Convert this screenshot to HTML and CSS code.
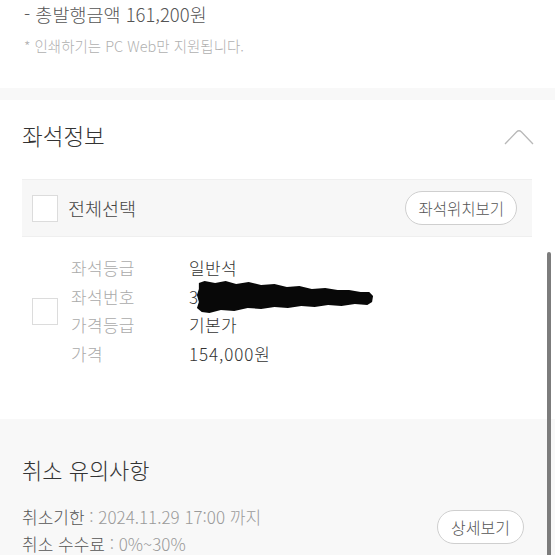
FILE: index.html
```html
<!DOCTYPE html>
<html lang="ko">
<head>
    <meta charset="UTF-8">
    <meta name="viewport" content="width=device-width, initial-scale=1.0">
    <title>좌석정보</title>
    <link rel="stylesheet" href="styles.css">
</head>
<body>
<div class="page">
    <section class="issue">
        <p class="total">- 총발행금액 161,200원</p>
        <p class="note">* 인쇄하기는 PC Web만 지원됩니다.</p>
    </section>

    <div class="band"></div>

    <section class="seat-info">
        <div class="sec-head">
            <h2>좌석정보</h2>
            <svg class="chevron" width="30" height="18" viewBox="0 0 30 18">
                <path d="M1 16 L12.5 4 Q15 1.5 17.5 4 L29 16" fill="none" stroke="#b8b8b8" stroke-width="1.3"/>
            </svg>
        </div>

        <div class="all-bar">
            <div class="select-all">
                <span class="check"></span>
                <span class="select-label">전체선택</span>
            </div>
            <button class="pill">좌석위치보기</button>
        </div>

        <div class="seat-row">
            <span class="check"></span>
            <dl class="seat-detail">
                <dt>좌석등급</dt>
                <dd>일반석</dd>
                <dt>좌석번호</dt>
                <dd class="hidden-no">3
                    <!-- marker scribble over the seat number -->
                    <svg class="scribble" width="178" height="34" viewBox="0 0 186 34" preserveAspectRatio="none">
                        <path d="M3 3 L9 1 L20 3 L31 1 L42 4 L55 2 L68 5 L82 4 L95 7 L108 6 L121 9 L135 8 L148 10 L160 10 L172 12 L181 12 L185 16 L184 22 L179 25 L166 24 L152 26 L138 25 L124 27 L110 26 L96 28 L82 27 L68 29 L54 28 L40 31 L26 30 L14 33 L6 32 L1 28 L3 22 L1 15 L3 9 Z" fill="#080808"/>
                    </svg>
                </dd>
                <dt>가격등급</dt>
                <dd>기본가</dd>
                <dt>가격</dt>
                <dd class="num">154,000원</dd>
            </dl>
        </div>
    </section>

    <section class="cancel">
        <h2>취소 유의사항</h2>
        <div class="cancel-body">
            <div class="cancel-lines">
                <p><span class="key">취소기한</span> : 2024.11.29 17:00 까지</p>
                <p><span class="key">취소 수수료</span> : 0%~30%</p>
            </div>
            <button class="pill small">상세보기</button>
        </div>
    </section>

    <div class="scrollbar"></div>
</div>
</body>
</html>
```

FILE: styles.css
```css
body {
    margin: 0;
    background: #fff;
    font-family: "Noto Sans CJK KR", "Noto Sans", sans-serif;
    font-weight: 300;
    color: #333;
}

p, h2, dl, dd {
    margin: 0;
}

.page {
    position: relative;
    width: 555px;
    height: 555px;
    overflow: hidden;
}

.issue {
    height: 88px;
    padding: 2px 24px 0;
    box-sizing: border-box;
}

.total {
    font-size: 18.5px;
    line-height: 24px;
    color: #555;
}

.note {
    margin-top: 11px;
    font-size: 14.5px;
    line-height: 18px;
    color: #b0b0b0;
}

.band {
    height: 12px;
    background: #f8f8f8;
}

.seat-info {
    height: 319px;
    padding: 0 23px 0 22px;
}

.sec-head {
    display: flex;
    justify-content: space-between;
    align-items: flex-start;
    height: 79px;
}

.sec-head h2 {
    margin-top: 21px;
    font-size: 22.5px;
    font-weight: 300;
    line-height: 28px;
    color: #333;
}

.chevron {
    margin-top: 28px;
    margin-right: -2px;
}

.all-bar {
    display: flex;
    justify-content: space-between;
    align-items: center;
    height: 58px;
    padding: 0 15px 0 10px;
    box-sizing: border-box;
    background: #f7f7f7;
    border-top: 1px solid #efefef;
    border-bottom: 1px solid #efefef;
}

.select-all {
    display: flex;
    align-items: center;
    gap: 10px;
}

.check {
    display: block;
    width: 26px;
    height: 27px;
    box-sizing: border-box;
    background: #fff;
    border: 1px solid #dcdcdc;
}

.select-label {
    font-size: 18.5px;
    color: #444;
}

.pill {
    height: 34px;
    padding: 0 12px;
    background: #fff;
    border: 1px solid #cfcfcf;
    border-radius: 17px;
    font-family: inherit;
    font-weight: 300;
    font-size: 15.5px;
    color: #555;
}

.seat-row {
    display: flex;
    align-items: center;
    gap: 13px;
    padding: 17px 0 0 10px;
}

.seat-detail {
    display: grid;
    grid-template-columns: 118px auto;
    font-size: 17px;
    letter-spacing: 0.3px;
    line-height: 28.5px;
}

.seat-detail dt {
    color: #aaa;
}

.seat-detail dd {
    color: #333;
}

.seat-detail .num {
    letter-spacing: 0.9px;
}

.hidden-no {
    position: relative;
}

.scribble {
    position: absolute;
    left: 7px;
    top: -3px;
}

.cancel {
    height: 136px;
    padding: 36px 31px 0 22px;
    box-sizing: border-box;
    background: #f8f8f8;
}

.cancel h2 {
    font-size: 22px;
    font-weight: 300;
    line-height: 28px;
    color: #333;
}

.cancel-body {
    display: flex;
    justify-content: space-between;
    align-items: flex-start;
    margin-top: 20px;
}

.cancel-lines p {
    font-size: 17px;
    line-height: 27px;
    color: #9a9a9a;
}

.cancel-lines .key {
    color: #555;
}

.pill.small {
    height: 34px;
    margin-top: 7px;
    padding: 0 13px;
    font-size: 16px;
}

.scrollbar {
    position: absolute;
    left: 547px;
    top: 252px;
    width: 4px;
    height: 310px;
    border-radius: 2px;
    background: #7c7c7c;
}
```
